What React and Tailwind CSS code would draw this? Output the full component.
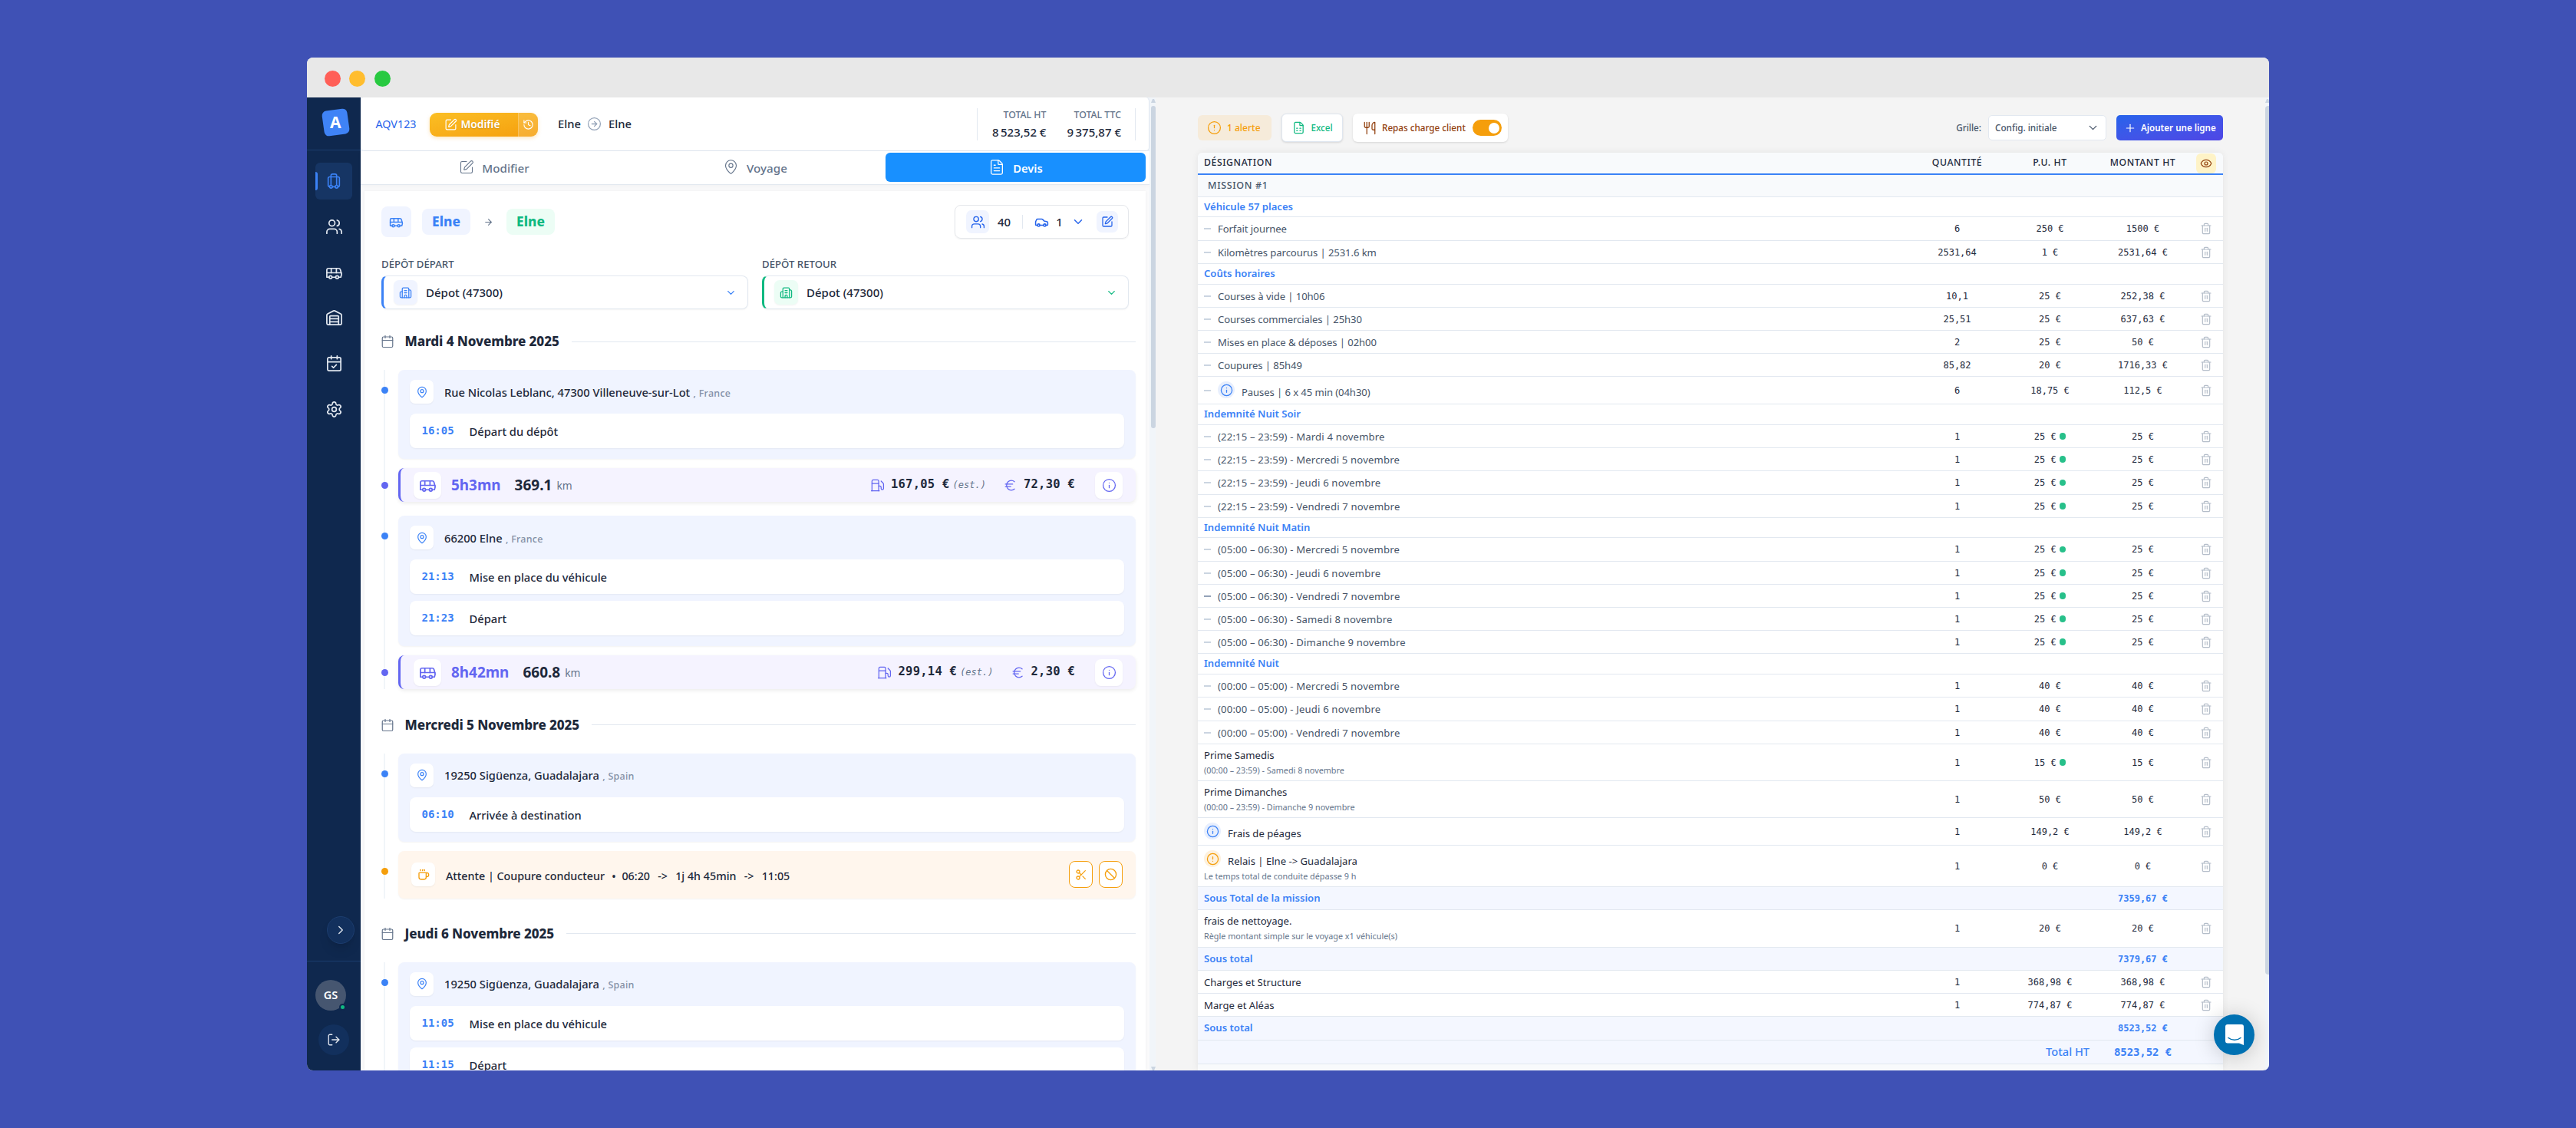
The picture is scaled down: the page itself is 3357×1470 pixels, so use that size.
import React from "react";
import {
  ArrowRight, Ban, Building2, Bus, Calendar, CalendarCheck, Car, ChevronDown, ChevronRight, CircleAlert,
  CircleArrowRight, Coffee, Euro, Eye, FileSpreadsheet, FileText, Fuel, History, Info, LogOut, Luggage,
  MapPin, Plus, Scissors, Settings, SquarePen, Trash2, Users, Utensils, Warehouse,
} from "lucide-react";

const MONO = "font-['DejaVu_Sans_Mono',monospace]";

/* ---------- Sidebar ---------- */

function Sidebar() {
  return (
    <aside className="flex w-[70px] shrink-0 flex-col bg-[#0f284e] text-[#e2e8f0]">
      <div className="flex h-[69px] items-center justify-center border-b border-[#1b3c6d] pl-[4px] pb-[3px]">
        <div className="flex size-[33px] -rotate-8 items-center justify-center rounded-[6px] bg-[#3f83f6]">
          <span className="rotate-8 text-[21px] leading-none font-bold text-white">A</span>
        </div>
      </div>
      <nav className="flex flex-col items-center pt-4">
        <div className="flex h-[48px] w-[48px] items-center justify-center rounded-[6px] bg-[#163564] text-[#3b82f6]">
          <span className="h-6 w-[3px] rounded-r bg-[#3b82f6]" />
          <span className="flex flex-1 justify-center pr-[3px]"><Luggage size={22} strokeWidth={1.8} /></span>
        </div>
        <div className="mt-[6px] flex flex-col">
          {[Users, Bus, Warehouse, CalendarCheck, Settings].map((I, i) => (
            <span key={i} className="flex h-[59.4px] items-center justify-center"><I size={23} strokeWidth={1.8} /></span>
          ))}
        </div>
      </nav>
      <div className="mt-auto flex h-[201px] flex-col">
        <div className="flex h-[58px] justify-end pr-[8px]">
          <span className="flex size-9 items-center justify-center rounded-full border border-[#1c3d6e] bg-[#12305d] shadow-lg">
            <ChevronRight size={18} strokeWidth={1.8} />
          </span>
        </div>
        <div className="flex flex-col border-t border-[#1b3c6d] pt-6">
          <span className="relative ml-[11px] flex size-10 items-center justify-center rounded-full bg-[#465670] text-[14.5px] font-semibold text-white">
            GS
            <i className="absolute right-0 bottom-0 size-[9px] rounded-full border-2 border-[#0f284e] bg-[#10b981]" />
          </span>
          <span className="mt-[18px] ml-[15px] flex size-10 items-center justify-center rounded-full bg-[#12305d]">
            <LogOut size={18} strokeWidth={1.8} />
          </span>
        </div>
      </div>
    </aside>
  );
}

/* ---------- Trip header ---------- */

function Total({ label, value }) {
  return (
    <div className="flex flex-col items-end">
      <span className="text-[12.3px] leading-[18px] font-medium text-[#64748b]">{label}</span>
      <span className="mt-[3px] text-[15px] leading-[20px] font-medium text-[#1e293b]">{value}</span>
    </div>
  );
}

function TripHeader() {
  return (
    <div className="h-[70px] bg-[#eef2f8]">
      <header className="flex h-[70px] items-center rounded-[5px] border-r border-b border-[#dfe6f0] bg-white pl-[19.5px] text-[#1e293b]">
        <span className="w-[70px] text-[14.3px] text-[#2563eb]">AQV123</span>
        <div className="mt-px flex h-[31px] w-[141px] overflow-hidden rounded-[9px] bg-gradient-to-br from-[#fbbf24] to-[#f59e0b] text-white shadow-[0_2px_5px_rgba(245,158,11,0.25)]">
          <span className="flex flex-1 items-center pl-[19px]">
            <SquarePen size={17} strokeWidth={1.7} />
            <span className="ml-[5px] text-[13.8px] font-semibold [text-shadow:0_1px_2px_rgba(0,0,0,0.2)]">Modifié</span>
          </span>
          <span className="flex w-[26px] items-center justify-center border-l border-white/20 bg-white/15"><History size={15} strokeWidth={1.8} /></span>
        </div>
        <span className="ml-[26.5px] text-[14.8px] font-medium">Elne</span>
        <CircleArrowRight size={19} strokeWidth={1.6} className="ml-[8px] text-[#94a3b8]" />
        <span className="ml-[9px] text-[14.8px] font-medium">Elne</span>
        <div className="mr-[17.5px] ml-auto flex h-[42px] w-[207px] items-center justify-end gap-[27px] border-x border-[#e2e8f0] pr-[17.5px]">
          <Total label="TOTAL HT" value={"8\u202f523,52 €"} />
          <Total label="TOTAL TTC" value={"9\u202f375,87 €"} />
        </div>
      </header>
    </div>
  );
}

function Tabs() {
  return (
    <div className="flex h-[44px] items-start border-b border-[#e2e8f0] bg-white py-[2px] pr-[5px] pl-1 text-[15.2px] font-medium text-[#64748b] shadow-[0_2px_6px_rgba(0,0,0,0.04)]">
      <div className="flex h-[38px] flex-1 items-center justify-center gap-[10px]">
        <SquarePen size={20} strokeWidth={1.3} className="-mt-px" /><span className="mt-[2px]">Modifier</span>
      </div>
      <div className="flex h-[38px] flex-1 items-center justify-center gap-[10px]">
        <MapPin size={21} strokeWidth={1.3} className="-mt-px" /><span className="mt-[2px]">Voyage</span>
      </div>
      <div className="flex h-[38px] w-[339px] items-center justify-center gap-[10px] rounded-[6px] bg-[#1890ff] text-[14.7px] font-semibold text-white">
        <FileText size={22} strokeWidth={1.4} className="-mt-px" /><span className="mt-[2px]">Devis</span>
      </div>
    </div>
  );
}

/* ---------- Trip body ---------- */

function Summary() {
  return (
    <div className="flex items-center pr-[9px] text-[17.3px] font-extrabold">
      <span className="flex h-10 w-[39px] items-center justify-center rounded-[8px] bg-[#f0f4ff] text-[#3b82f6]"><Bus size={19} strokeWidth={1.9} /></span>
      <span className="ml-[14px] flex h-[34px] w-[63px] items-center justify-center rounded-[8px] bg-[#f0f4ff] text-[#3b82f6]">Elne</span>
      <ArrowRight size={13} strokeWidth={2} className="mx-[17px] text-[#64748b]" />
      <span className="flex h-[34px] w-[63px] items-center justify-center rounded-[8px] bg-[#ecfdf5] text-[#10b981]">Elne</span>
      <div className="ml-auto flex h-[44px] w-[227px] items-center rounded-[8px] border border-[#e5e7eb] pl-[14px] text-[15px] font-medium text-[#1e293b] shadow-xs">
        <span className="flex size-[30px] items-center justify-center rounded-[7px] bg-[#f0f4ff] text-[#2563eb]"><Users size={19} strokeWidth={1.7} /></span>
        <span className="ml-[11px]">40</span>
        <span className="ml-[15px] h-[18px] w-px bg-[#e2e8f0]" />
        <Car size={19} strokeWidth={1.9} className="ml-[15px] text-[#2563eb]" />
        <span className="ml-[9px]">1</span>
        <ChevronDown size={18} strokeWidth={1.9} className="ml-[11px] text-[#2563eb]" />
        <span className="ml-[15px] flex size-7 items-center justify-center rounded-[7px] bg-[#f0f4ff] text-[#2563eb]"><SquarePen size={16} strokeWidth={1.9} /></span>
      </div>
    </div>
  );
}

function Depot({ label, accent, tile, text }) {
  return (
    <div className="w-[478px]">
      <div className="text-[13.2px] leading-[18px] font-medium text-[#475569]">{label}</div>
      <div className={`mt-[6px] flex h-[44px] items-center rounded-[8px] border border-l-3 border-[#e2e8f0] bg-white pr-[21px] pl-[13px] shadow-xs ${accent}`}>
        <span className={`flex h-8 w-[31px] items-center justify-center rounded-[7px] shadow-xs ${tile}`}><Building2 size={17} strokeWidth={1.8} /></span>
        <span className="mt-px ml-[11px] text-[15px] font-medium text-[#1e293b]">Dépot (47300)</span>
        <ChevronDown size={15} strokeWidth={2.2} className={`ml-auto -mr-[7px] ${text}`} />
      </div>
    </div>
  );
}

function DayTitle({ children }) {
  return (
    <div className="flex h-[24px] items-center">
      <Calendar size={18} strokeWidth={1.6} className="-ml-[1.5px] text-[#64748b]" />
      <h2 className="ml-[14px] text-[17.1px] font-extrabold tracking-[-0.12px] text-[#1e293b]">{children}</h2>
      <span className="ml-4 h-px flex-1 bg-[#e2e8f0]" />
    </div>
  );
}

const DOTS = { blue: "bg-[#3b82f6]", indigo: "bg-[#6366f1]", amber: "bg-[#f59e0b]" };

function Event({ dot, children, className = "" }) {
  return (
    <div className={`relative flex pl-[22px] ${className}`}>
      <i className={`absolute top-[22px] -left-[0.5px] size-[9px] rounded-full ${DOTS[dot]}`} />
      {children}
    </div>
  );
}

function Stop({ address, country, steps, className = "" }) {
  return (
    <Event dot="blue" className={className}>
      <div className="flex-1 rounded-[8px] bg-[#f0f4ff] px-[15px] pt-[13px] pb-[13.5px] shadow-xs">
        <div className="flex h-[31px] items-center">
          <span className="flex size-[31px] items-center justify-center rounded-[7px] bg-white text-[#3b82f6] shadow-xs"><MapPin size={16} strokeWidth={1.8} /></span>
          <span className="mt-px ml-[14px] text-[14.7px] font-medium text-[#1e293b]">
            {address} <span className="ml-[0.5px] text-[12.5px] tracking-[0.25px] text-[#8390a6]">, {country}</span>
          </span>
        </div>
        <div className="mt-[13px] flex flex-col gap-[9px]">
          {steps.map(([time, label]) => (
            <div key={time} className="flex h-[45px] items-center rounded-[8px] bg-white pl-[15.5px] shadow-xs">
              <span className={`w-[62px] text-[14px] font-bold text-[#3b82f6] ${MONO}`}>{time}</span>
              <span className="mt-[2px] text-[14.7px] font-medium text-[#1e293b]">{label}</span>
            </div>
          ))}
        </div>
      </div>
    </Event>
  );
}

function Leg({ duration, km, fuel, toll, className = "" }) {
  return (
    <Event dot="indigo" className={`[&>i]:top-[18px] ${className}`}>
      <div className="flex h-[44px] flex-1 items-center rounded-[8px] border-l-3 border-[#6366f1] bg-[#f5f3ff] pr-[17px] pl-[17px] shadow-[0_2px_5px_rgba(0,0,0,0.08)]">
        <span className="flex h-[35px] w-9 items-center justify-center rounded-[8px] bg-white text-[#6366f1] shadow-xs"><Bus size={23} strokeWidth={1.8} /></span>
        <span className="ml-[13px] text-[18.9px] font-bold text-[#6366f1]">{duration}</span>
        <span className="ml-[18px] text-[19px] font-bold text-[#1e293b]">{km}</span>
        <span className="mt-[3px] ml-[6px] text-[13.8px] text-[#64748b]">km</span>
        <div className={`ml-auto flex items-center text-[15.5px] tracking-[0.25px] font-bold text-[#1e293b] ${MONO}`}>
          <Fuel size={19} strokeWidth={1.6} className="text-[#6366f1]" />
          <span className="ml-[8px]">{fuel}</span>
          <span className="ml-[4px] text-[12px] tracking-[0px] font-normal text-[#64748b] italic">(est.)</span>
          <Euro size={19} strokeWidth={1.6} className="ml-[22px] text-[#6366f1]" />
          <span className="ml-[8px]">{toll}</span>
        </div>
        <span className="ml-[26px] flex h-[35px] w-9 items-center justify-center rounded-[8px] bg-white text-[#6366f1] shadow-xs"><Info size={19} strokeWidth={1.6} /></span>
      </div>
    </Event>
  );
}

function Waiting() {
  const button = "flex h-[35px] w-[31px] items-center justify-center rounded-[8px] border border-[#f59e0b] bg-white";
  return (
    <Event dot="amber" className="mt-[12px]">
      <div className="flex h-[61.5px] flex-1 items-center rounded-[8px] bg-[#fff6ed] pr-[17px] pl-[17px] shadow-xs">
        <span className="flex size-[31px] items-center justify-center rounded-[7px] bg-white text-[#f59e0b] shadow-xs"><Coffee size={16} strokeWidth={2} /></span>
        <div className="mt-[4px] ml-[14px] flex gap-[10.2px] text-[14.3px] font-medium text-[#1e293b]">
          <span>Attente | Coupure conducteur</span>
          <span className="w-[4px] -mx-px">•</span>
          <span>06:20</span>
          <span>-&gt;</span>
          <span>1j 4h 45min</span>
          <span>-&gt;</span>
          <span>11:05</span>
        </div>
        <div className="ml-auto flex gap-2 text-[#f59e0b]">
          <span className={button}><Scissors size={16} strokeWidth={1.9} /></span>
          <span className={button}><Ban size={17} strokeWidth={1.9} /></span>
        </div>
      </div>
    </Event>
  );
}

function Rail({ children }) {
  return (
    <div className="relative mt-[25px]">
      <i className="absolute top-0 bottom-0 left-[3px] w-[2px] bg-[#f1f5f9]" />
      {children}
    </div>
  );
}

function TripPanel() {
  return (
    <section className="flex w-[1028px] shrink-0 flex-col bg-[#fafafb]">
      <TripHeader />
      <Tabs />
      <div className="mt-[8px] mr-[5px] ml-[5px] flex-1 overflow-hidden bg-white pr-[13px] pl-[22px] shadow-[0_0_4px_rgba(0,0,0,0.05)]">
        <div className="pt-[18px]"><Summary /></div>
        <div className="mt-[24px] flex gap-[18px]">
          <Depot label="DÉPÔT DÉPART" accent="border-l-[#3b82f6]" tile="bg-[#f0f4ff] text-[#3b82f6]" text="text-[#3b82f6]" />
          <Depot label="DÉPÔT RETOUR" accent="border-l-[#10b981]" tile="bg-[#ecfdf5] text-[#10b981]" text="text-[#10b981]" />
        </div>
        <div className="mt-[30px]">
          <DayTitle>Mardi 4 Novembre 2025</DayTitle>
          <Rail>
            <Stop address="Rue Nicolas Leblanc, 47300 Villeneuve-sur-Lot" country="France" steps={[["16:05", "Départ du dépôt"]]} />
            <Leg className="mt-[12.5px]" duration="5h3mn" km="369.1" fuel="167,05 €" toll="72,30 €" />
            <Stop className="mt-[18px]" address="66200 Elne" country="France" steps={[["21:13", "Mise en place du véhicule"], ["21:23", "Départ"]]} />
            <Leg className="mt-[12.5px]" duration="8h42mn" km="660.8" fuel="299,14 €" toll="2,30 €" />
          </Rail>
        </div>
        <div className="mt-[34.5px]">
          <DayTitle>Mercredi 5 Novembre 2025</DayTitle>
          <Rail>
            <Stop address="19250 Sigüenza, Guadalajara" country="Spain" steps={[["06:10", "Arrivée à destination"]]} />
            <Waiting />
          </Rail>
        </div>
        <div className="mt-[34px]">
          <DayTitle>Jeudi 6 Novembre 2025</DayTitle>
          <Rail>
            <Stop address="19250 Sigüenza, Guadalajara" country="Spain" steps={[["11:05", "Mise en place du véhicule"], ["11:15", "Départ"]]} />
          </Rail>
        </div>
      </div>
    </section>
  );
}

/* ---------- Quote table ---------- */

const H = {
  26: "h-[26px]", 27: "h-[27px]", 29: "h-[29px]", 30: "h-[30px]", 31: "h-[31px]", 36: "h-[36px]",
  48: "h-[48px]", 49: "h-[49px]", 54: "h-[54px]",
};

// kind, height, label, quantity, unit price, amount, options
const ROWS = [
  ["mission", 29, "MISSION #1"],
  ["group", 26, "Véhicule 57 places"],
  ["sub", 31, "Forfait journee", "6", "250 €", "1500 €"],
  ["sub", 30, "Kilomètres parcourus | 2531.6 km", "2531,64", "1 €", "2531,64 €"],
  ["group", 27, "Coûts horaires"],
  ["sub", 30, "Courses à vide | 10h06", "10,1", "25 €", "252,38 €"],
  ["sub", 30, "Courses commerciales | 25h30", "25,51", "25 €", "637,63 €"],
  ["sub", 30, "Mises en place & déposes | 02h00", "2", "25 €", "50 €"],
  ["sub", 30, "Coupures | 85h49", "85,82", "20 €", "1716,33 €"],
  ["sub", 36, "Pauses | 6 x 45 min (04h30)", "6", "18,75 €", "112,5 €", { info: true }],
  ["group", 27, "Indemnité Nuit Soir"],
  ["sub", 30, "(22:15 – 23:59) - Mardi 4 novembre", "1", "25 €", "25 €", { dot: true }],
  ["sub", 30, "(22:15 – 23:59) - Mercredi 5 novembre", "1", "25 €", "25 €", { dot: true }],
  ["sub", 31, "(22:15 – 23:59) - Jeudi 6 novembre", "1", "25 €", "25 €", { dot: true }],
  ["sub", 30, "(22:15 – 23:59) - Vendredi 7 novembre", "1", "25 €", "25 €", { dot: true }],
  ["group", 26, "Indemnité Nuit Matin"],
  ["sub", 31, "(05:00 – 06:30) - Mercredi 5 novembre", "1", "25 €", "25 €", { dot: true }],
  ["sub", 30, "(05:00 – 06:30) - Jeudi 6 novembre", "1", "25 €", "25 €", { dot: true }],
  ["sub", 30, "(05:00 – 06:30) - Vendredi 7 novembre", "1", "25 €", "25 €", { dot: true, strong: true }],
  ["sub", 30, "(05:00 – 06:30) - Samedi 8 novembre", "1", "25 €", "25 €", { dot: true }],
  ["sub", 30, "(05:00 – 06:30) - Dimanche 9 novembre", "1", "25 €", "25 €", { dot: true }],
  ["group", 27, "Indemnité Nuit"],
  ["sub", 30, "(00:00 – 05:00) - Mercredi 5 novembre", "1", "40 €", "40 €"],
  ["sub", 31, "(00:00 – 05:00) - Jeudi 6 novembre", "1", "40 €", "40 €"],
  ["sub", 30, "(00:00 – 05:00) - Vendredi 7 novembre", "1", "40 €", "40 €"],
  ["item", 48, "Prime Samedis", "1", "15 €", "15 €", { dot: true, note: "(00:00 – 23:59) - Samedi 8 novembre" }],
  ["item", 48, "Prime Dimanches", "1", "50 €", "50 €", { note: "(00:00 – 23:59) - Dimanche 9 novembre" }],
  ["item", 36, "Frais de péages", "1", "149,2 €", "149,2 €", { info: true }],
  ["item", 54, "Relais | Elne -> Guadalajara", "1", "0 €", "0 €", { alert: true, note: "Le temps total de conduite dépasse 9 h" }],
  ["total", 30, "Sous Total de la mission", "", "", "7359,67 €"],
  ["item", 49, "frais de nettoyage.", "1", "20 €", "20 €", { note: "Règle montant simple sur le voyage x1 véhicule(s)" }],
  ["total", 30, "Sous total", "", "", "7379,67 €"],
  ["item", 30, "Charges et Structure", "1", "368,98 €", "368,98 €"],
  ["item", 30, "Marge et Aléas", "1", "774,87 €", "774,87 €"],
  ["total", 31, "Sous total", "", "", "8523,52 €"],
];

const GRID = "grid grid-cols-[929px_121px_121px_121px_44px] items-center";

function Badge({ alert }) {
  return alert ? (
    <span className="mr-[9px] -mt-px flex size-[22px] items-center justify-center rounded-full bg-[#fdf1de] text-[#f59e0b]"><CircleAlert size={17} strokeWidth={1.8} /></span>
  ) : (
    <span className="mr-[9px] -mt-px flex size-[22px] items-center justify-center rounded-full bg-[#e8effd] text-[#3b82f6]"><Info size={17} strokeWidth={1.8} /></span>
  );
}

function Row({ row }) {
  const [kind, h, label, qty, pu, amount, opt = {}] = row;
  const base = `${H[h]} border-b border-[#e2e8f0]`;
  if (kind === "mission")
    return <div className={`${base} flex items-center bg-[#f8fafc] pl-[13px] text-[12.5px] tracking-[0.65px] font-medium text-[#475569]`}>{label}</div>;
  if (kind === "group")
    return <div className={`${base} flex items-center bg-white pl-2 text-[13.1px] font-semibold text-[#3b82f6]`}>{label}</div>;
  if (kind === "total")
    return (
      <div className={`${base} ${GRID} bg-[#f4f7ff] text-[#3b82f6]`}>
        <span className="pl-2 text-[13.1px] font-semibold">{label}</span><span /><span />
        <span className={`text-center text-[12px] font-bold ${MONO}`}>{amount}</span><span />
      </div>
    );
  const sub = kind === "sub";
  const badge = opt.info || opt.alert;
  const spacing = !sub ? "" : label.startsWith("(") ? "tracking-[0.17px] text-[#475569]" : "tracking-[-0.09px] text-[#475569]";
  return (
    <div className={`${base} ${GRID} bg-white text-[#1e293b]`}>
      <div className="flex flex-col pl-2">
        <div className={badge ? "flex h-[26px] items-center" : "flex items-center"}>
          {sub && <i className={`mr-[9px] h-[2px] w-[9px] ${opt.strong ? "bg-[#94a3b8]" : "bg-[#cbd5e1]"}`} />}
          {badge && <Badge alert={opt.alert} />}
          <span className={`text-[13.1px] leading-5 ${spacing} ${badge ? "mt-[5px]" : ""}`}>{label}</span>
        </div>
        {opt.note && <span className={`text-[10.8px] text-[#64748b] ${badge ? "leading-[18px]" : "leading-5"}`}>{opt.note}</span>}
      </div>
      <span className={`text-center text-[12px] ${MONO}`}>{qty}</span>
      <span className={`flex items-center justify-center text-[12px] ${MONO}`}>
        {pu}{opt.dot && <i className="ml-[4px] size-[8.5px] rounded-full bg-[#27c08a]" />}
      </span>
      <span className={`text-center text-[12px] ${MONO}`}>{amount}</span>
      <span className="flex justify-center text-[#b4bdc9]"><Trash2 size={16} strokeWidth={1.8} /></span>
    </div>
  );
}

function QuoteTable() {
  return (
    <div className="mt-[14px] w-[1336px] flex-1 overflow-hidden rounded-t-[6px] bg-[#f8fafc] shadow-[0_0_10px_rgba(0,0,0,0.07)]">
      <div className={`${GRID} h-[29px] border-b-2 border-[#3b82f6] bg-[#f8fafc] text-center text-[12.2px] tracking-[0.6px] font-medium text-[#1e293b]`}>
        <span className="pl-2 text-left">DÉSIGNATION</span>
        <span>QUANTITÉ</span>
        <span>P.U. HT</span>
        <span>MONTANT HT</span>
        <span className="mx-auto flex size-[26px] items-center justify-center rounded-[6px] bg-[#fef3c7] text-[#92400e]"><Eye size={16} strokeWidth={1.8} /></span>
      </div>
      {ROWS.map((row, i) => <Row key={i} row={row} />)}
      <div className={`${GRID} h-[31px] border-b border-[#e2e8f0] bg-[#f4f7ff] text-[#3b82f6]`}>
        <span /><span />
        <span className="pr-[9px] text-right text-[14.6px] font-medium">Total HT</span>
        <span className={`text-center text-[14px] tracking-[-0.1px] font-bold ${MONO}`}>8523,52 €</span>
        <span />
      </div>
    </div>
  );
}

function Toolbar() {
  return (
    <div className="flex h-[37px] w-[1336px] items-center text-[11.7px] font-medium">
      <span className="flex h-[33px] w-24 items-center rounded-[6px] bg-[#f6ebda] pl-[12px] text-[#f59e0b]">
        <CircleAlert size={19} strokeWidth={1.6} />
        <span className="ml-[7px] text-[12px]">1 alerte</span>
      </span>
      <span className="ml-[13px] flex h-[37px] w-[80px] items-center rounded-[6px] border border-[#dfe6ef] bg-white pl-[12.5px] text-[#10b981] shadow-sm">
        <FileSpreadsheet size={17} strokeWidth={1.8} />
        <span className="ml-[8px]">Excel</span>
      </span>
      <span className="ml-[13px] flex h-[37px] w-[202px] items-center rounded-[6px] bg-white pl-[13px] text-[#92400e] shadow-sm">
        <Utensils size={18} strokeWidth={1.7} />
        <span className="ml-[7px]">Repas charge client</span>
        <span className="ml-[9px] flex h-[21px] w-[38px] items-center justify-end rounded-full bg-[#f59e0b] pr-[3px]"><i className="size-[14px] rounded-full bg-white" /></span>
      </span>
      <span className="ml-auto text-[#475569]">Grille:</span>
      <span className="ml-[9px] flex h-[33px] w-[154px] items-center justify-between rounded-[5px] border border-[#e2e8f0] bg-white pr-[8px] pl-2 text-[#475569]">
        Config. initiale<ChevronDown size={17} strokeWidth={1.8} />
      </span>
      <span className="ml-[13px] flex h-[33px] w-[139px] items-center rounded-[5px] bg-gradient-to-br from-[#2563eb] to-[#4f46e5] pl-[10px] text-[11.6px] font-semibold text-white">
        <Plus size={16} strokeWidth={1.8} /><span className="ml-[6px]">Ajouter une ligne</span>
      </span>
    </div>
  );
}

/* ---------- Scrollbars and chat ---------- */

function TriUp() {
  return <svg width="6" height="5" viewBox="0 0 6 5" className="text-[#cbd5e1]"><path d="M2 0h2l2 5H0z" fill="currentColor" /></svg>;
}

export default function App() {
  return (
    <div className="flex h-[1470px] w-[3357px] bg-[#3f51b5] pt-[75px] pl-[400px] font-['Noto_Sans',sans-serif]">
      <div className="relative flex h-[1320px] w-[2557px] flex-col overflow-hidden rounded-[8px] bg-[#f4f4f4]">
        <div className="flex h-[52px] shrink-0 items-center gap-[11.5px] bg-[#e8e8e8] pt-[3px] pl-[22.5px]">
          <i className="size-[21px] rounded-full bg-[#ff5f57]" />
          <i className="size-[21px] rounded-full bg-[#ffbd2e]" />
          <i className="size-[21px] rounded-full bg-[#28c940]" />
        </div>
        <div className="flex h-[1268px]">
          <Sidebar />
          <TripPanel />
          <div className="flex w-[8px] flex-col items-end bg-[#f1f5f9] pt-[2px]">
            <TriUp />
            <span className="mt-[4px] h-[420px] w-[6px] rounded-full bg-[#cbd5e1]" />
            <span className="mt-auto rotate-180"><TriUp /></span>
          </div>
          <section className="flex flex-1 flex-col pt-[21px] pl-[55px]">
            <Toolbar />
            <QuoteTable />
          </section>
          <div className="flex w-[5px] flex-col bg-[#f1f5f9] pt-[2px]">
            <TriUp />
            <span className="mt-[4px] h-[1132px] rounded-l bg-[#cbd5e1]" />
          </div>
        </div>
        <div className="absolute right-[19px] bottom-[20px] flex size-[53px] items-center justify-center rounded-full bg-[#0071b2] shadow-[0_2px_28px_rgba(0,0,0,0.2)]">
          <svg width="24" height="27" viewBox="0 0 24 27">
            <path d="M3 0h18a3 3 0 0 1 3 3v24l-6-2.5H3a3 3 0 0 1-3-3V3a3 3 0 0 1 3-3z" fill="#fff" />
            <path d="M4 17.500c4.500 3.600 11.500 3.600 16 0" fill="none" stroke="#0071b2" strokeWidth="1.600" strokeLinecap="round" />
          </svg>
        </div>
      </div>
    </div>
  );
}
